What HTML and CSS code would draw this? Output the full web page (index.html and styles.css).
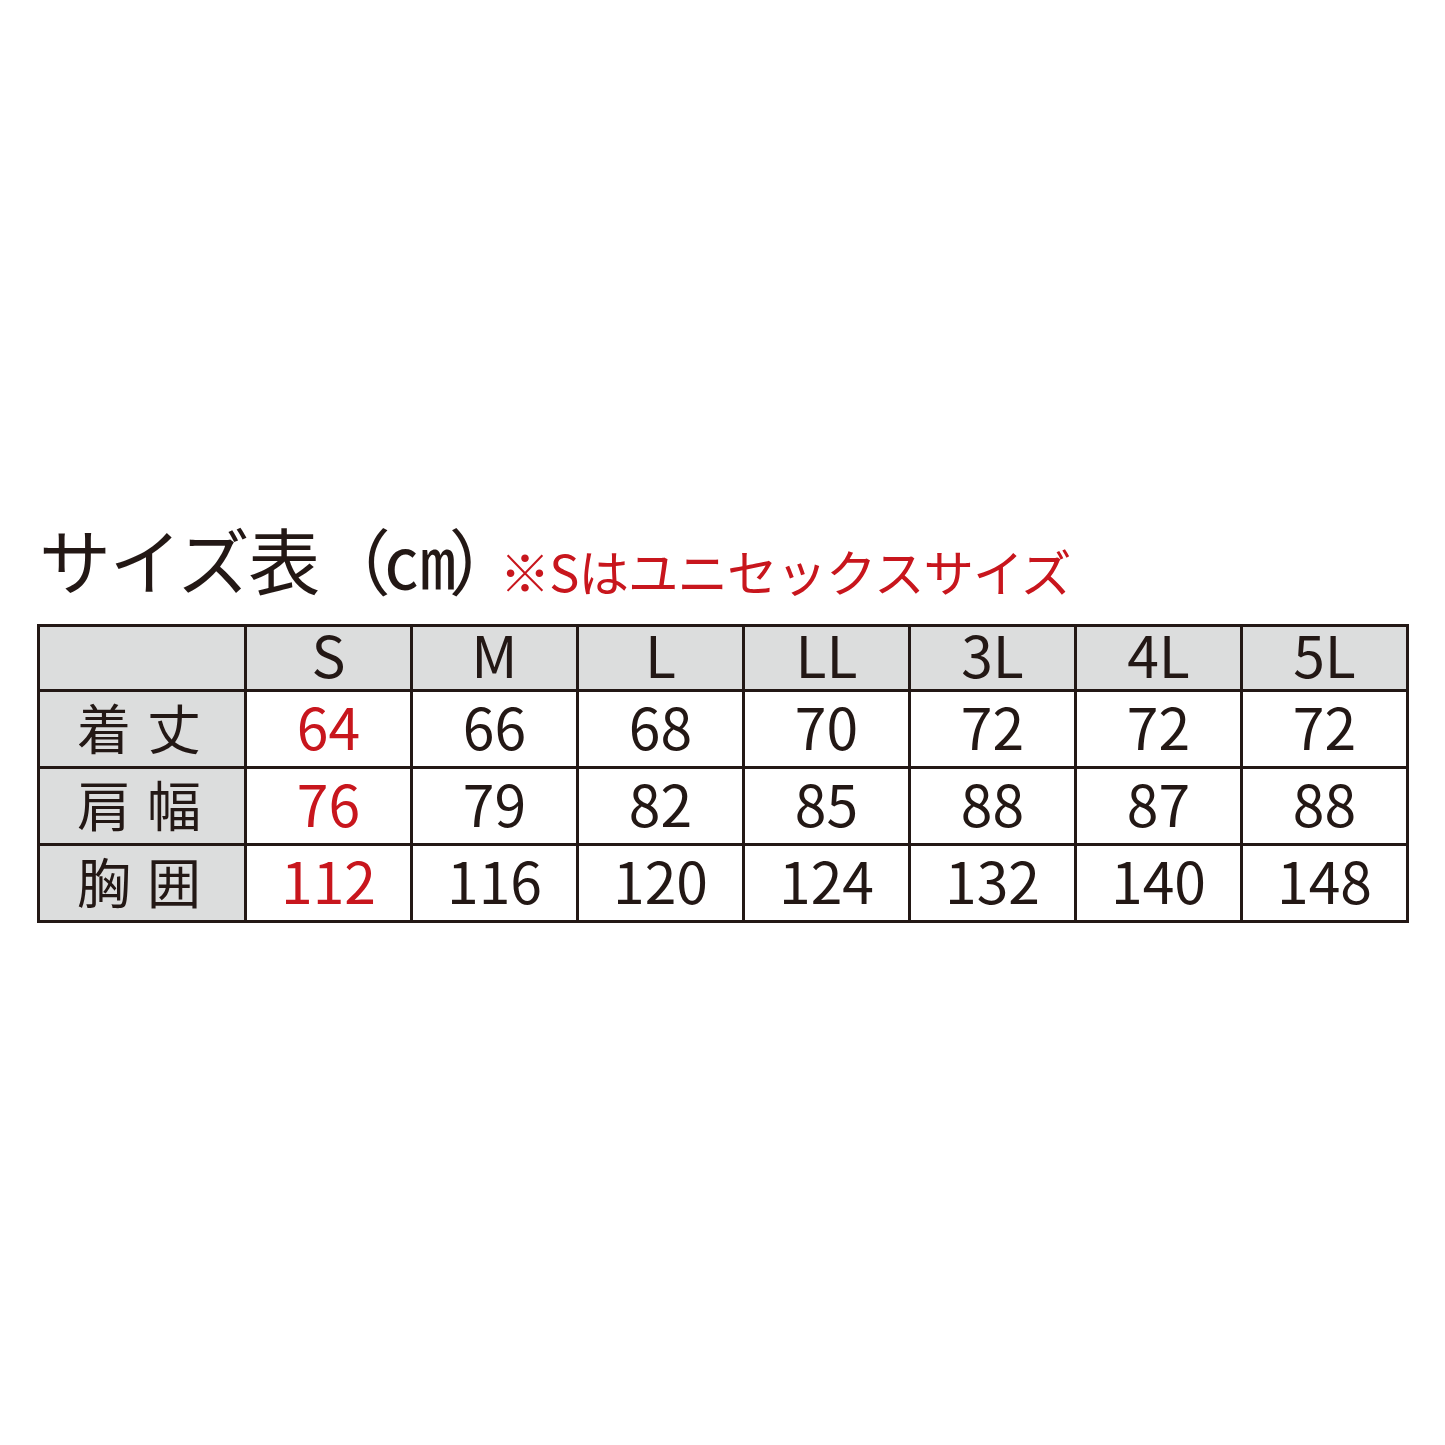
FILE: index.html
```html
<!DOCTYPE html>
<html lang="ja">
<head>
<meta charset="utf-8">
<title>サイズ表</title>
<link rel="stylesheet" href="styles.css">
</head>
<body>
<div class="page">
  <div class="heading">
    <h1 class="title">サイズ表<span class="unit">（㎝）</span></h1>
    <p class="note">※Sはユニセックスサイズ</p>
  </div>
  <table class="size-table">
    <colgroup>
      <col class="c-label">
      <col class="c-size"><col class="c-size"><col class="c-size"><col class="c-size"><col class="c-size"><col class="c-size"><col class="c-size">
    </colgroup>
    <thead>
      <tr class="head-row">
        <th class="corner"></th>
        <th>S</th><th>M</th><th>L</th><th>LL</th><th>3L</th><th>4L</th><th>5L</th>
      </tr>
    </thead>
    <tbody>
      <tr>
        <th class="label">着丈</th>
        <td class="red">64</td><td>66</td><td>68</td><td>70</td><td>72</td><td>72</td><td>72</td>
      </tr>
      <tr>
        <th class="label">肩幅</th>
        <td class="red">76</td><td>79</td><td>82</td><td>85</td><td>88</td><td>87</td><td>88</td>
      </tr>
      <tr>
        <th class="label">胸囲</th>
        <td class="red">112</td><td>116</td><td>120</td><td>124</td><td>132</td><td>140</td><td>148</td>
      </tr>
    </tbody>
  </table>
</div>
</body>
</html>
```
FILE: styles.css
```css
html, body {
  margin: 0;
  padding: 0;
  background: #ffffff;
}
body {
  font-family: "Noto Sans CJK JP", "Noto Sans", sans-serif;
  color: #231815;
}
.page {
  padding: 508px 0 0 37px;
}
.heading {
  display: flex;
  align-items: baseline;
  height: 100px;
}
.title {
  margin: 0 0 0 2px;
  font-size: 72px;
  font-weight: 400;
  line-height: 100px;
  letter-spacing: -1.5px;
}
.unit {
  letter-spacing: -7px;
}
.note {
  margin: 0 0 0 -14px;
  font-size: 50.5px;
  font-weight: 400;
  color: #c8161d;
  line-height: 100px;
  letter-spacing: -1px;
  position: relative;
  top: 3px;
}
.size-table {
  border-collapse: collapse;
  table-layout: fixed;
  width: 1372px;
  margin-top: 16px;
}
.c-label { width: 207px; }
.c-size { width: 166px; }
.size-table th,
.size-table td {
  border: 3px solid #231815;
  padding: 0 0 7px 0;
  text-align: center;
  font-weight: 400;
  font-size: 57px;
  line-height: 57px;
}
.head-row th {
  background: #dcdddd;
  height: 52px;
  line-height: 52px;
  padding-bottom: 10px;
}
.size-table tbody tr {
  height: 77px;
}
.size-table td {
  background: #ffffff;
}
.size-table .label {
  background: #dcdddd;
  font-size: 54px;
  letter-spacing: 16px;
  text-indent: 10px;
  padding-bottom: 6px;
}
.red {
  color: #c8161d;
}
```
